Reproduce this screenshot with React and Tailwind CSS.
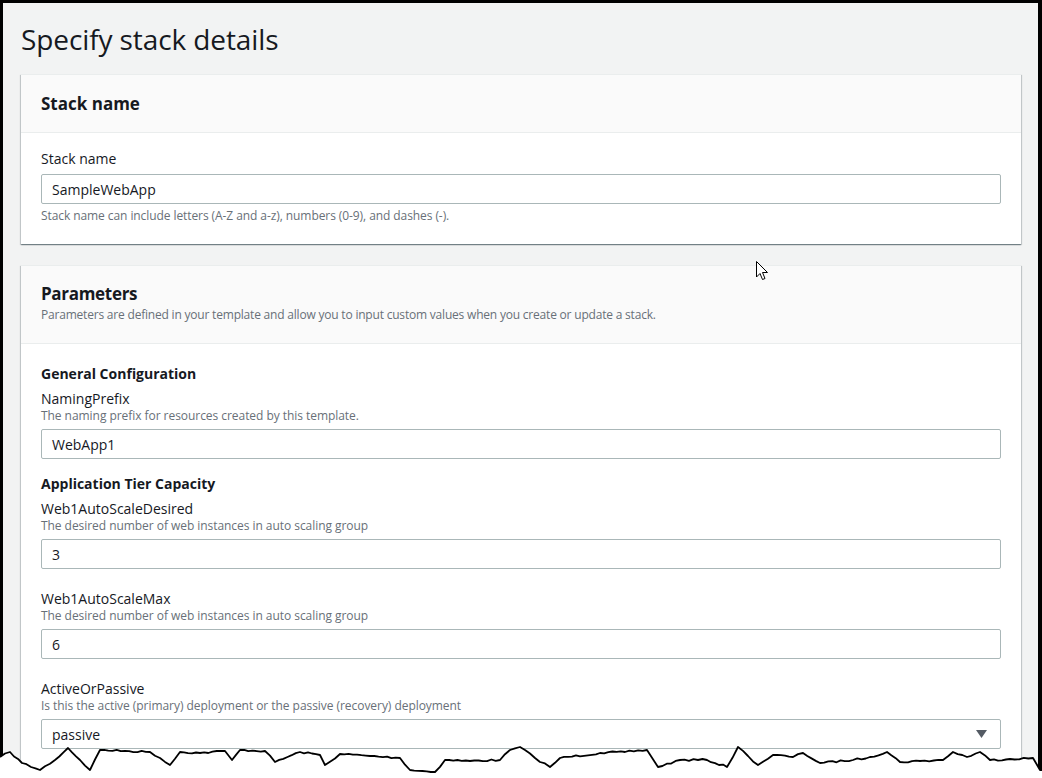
import React from "react";

const FONT = { fontFamily: '"Open Sans", "Noto Sans", Arial, sans-serif' };

function Field({ label, desc, value, select, className = "" }) {
  return (
    <div className={"flex flex-col " + className}>
      <div className="text-[14px] leading-[20px] text-[#16191f]">{label}</div>
      {desc && <div className="text-[12px] leading-[16px] text-[#687078] -mt-[1px] tracking-[-0.05px]">{desc}</div>}
      <div className="mt-[5px] h-[30px] border border-[#aab7b8] rounded-[2px] bg-white flex items-center justify-between pl-[10px] pr-[13px] text-[14px] text-[#16191f]">
        <span>{value}</span>
        {select && (
          <svg width="11" height="8" viewBox="0 0 11 8">
            <path d="M0 0 L11 0 L5.5 8 Z" fill="#545b64" />
          </svg>
        )}
      </div>
    </div>
  );
}

const torn = [
  [0, 757], [10, 752], [22, 763], [40, 770], [55, 760], [68, 748], [80, 760], [90, 770], [100, 750], [125, 751], [150, 752], [160, 758], [170, 765], [180, 752], [200, 753], [225, 751], [232, 760], [240, 750], [265, 751], [275, 762], [300, 752], [320, 755], [325, 765], [340, 754], [370, 756], [400, 758], [410, 770], [435, 772], [445, 760], [470, 761], [500, 760], [510, 750], [520, 747], [535, 758], [550, 767], [560, 758], [600, 753], [625, 752], [647, 750], [658, 767], [680, 760], [707, 760], [727, 767], [738, 747], [748, 756], [758, 765], [773, 755], [793, 757], [803, 753], [820, 763], [853, 760], [870, 757], [887, 752], [900, 762], [920, 761], [943, 760], [953, 752], [967, 757], [980, 752], [990, 760], [1010, 759], [1033, 758], [1040, 770], [1042, 770],
];

function roughen(pts) {
  const out = [];
  let seed = 7;
  const rnd = () => {
    seed = (seed * 16807) % 2147483647;
    return seed / 2147483647;
  };
  for (let i = 0; i < pts.length - 1; i++) {
    const [x0, y0] = pts[i];
    const [x1, y1] = pts[i + 1];
    out.push([x0, y0]);
    const n = Math.floor((x1 - x0) / 4);
    for (let k = 1; k < n; k++) {
      const t = k / n;
      out.push([
        +(x0 + (x1 - x0) * t).toFixed(1),
        +(y0 + (y1 - y0) * t + (rnd() - 0.5) * 2).toFixed(1),
      ]);
    }
  }
  out.push(pts[pts.length - 1]);
  return out;
}

export default function App() {
  const line = roughen(torn).map((p) => p.join(",")).join(" ");
  const poly = line + " 1042,778 0,778";
  return (
    <div className="relative w-[1042px] h-[778px] bg-white overflow-hidden" style={FONT}>
      <div className="w-full h-full border-l-[3px] border-t-[3px] border-r-[4px] border-black bg-[#f2f3f3] pl-[18px] pr-[17px] overflow-hidden">
        <h1 className="pt-[19px] text-[28px] leading-[34px] text-[#16191f] font-normal tracking-[-0.1px]">Specify stack details</h1>

        <div className="mt-[18px] bg-white border-t border-[#eaeded] shadow-[0_1px_1px_0_rgba(0,28,36,0.35),1px_1px_1px_0_rgba(0,28,36,0.15),-1px_1px_1px_0_rgba(0,28,36,0.15)]">
          <div className="h-[58px] bg-[#fafafa] border-b border-[#eaeded] px-[20px] flex items-center">
            <h2 className="text-[17px] font-bold text-[#16191f] leading-[22px]">Stack name</h2>
          </div>
          <div className="px-[20px] pt-[16px] pb-[20px] flex flex-col">
            <div className="text-[14px] leading-[20px] text-[#16191f]">Stack name</div>
            <div className="mt-[5px] h-[30px] border border-[#aab7b8] rounded-[2px] flex items-center pl-[10px] text-[14px] text-[#16191f]">SampleWebApp</div>
            <div className="mt-[4px] text-[12px] leading-[16px] text-[#687078] tracking-[-0.08px]">Stack name can include letters (A-Z and a-z), numbers (0-9), and dashes (-).</div>
          </div>
        </div>

        <div className="mt-[21px] bg-white border-t border-[#eaeded] shadow-[0_1px_1px_0_rgba(0,28,36,0.35),1px_1px_1px_0_rgba(0,28,36,0.15),-1px_1px_1px_0_rgba(0,28,36,0.15)]">
          <div className="h-[78px] bg-[#fafafa] border-b border-[#eaeded] px-[20px] pt-[17px] flex flex-col">
            <h2 className="text-[17px] font-bold text-[#16191f] leading-[22px] tracking-[-0.3px]">Parameters</h2>
            <div className="mt-[2px] text-[12px] leading-[16px] text-[#687078] tracking-[-0.2px]">Parameters are defined in your template and allow you to input custom values when you create or update a stack.</div>
          </div>
          <div className="px-[20px] pt-[20px] pb-[40px] flex flex-col">
            <h3 className="text-[14px] leading-[20px] font-bold text-[#16191f]">General Configuration</h3>
            <Field className="mt-[5px]" label="NamingPrefix" desc="The naming prefix for resources created by this template." value="WebApp1" />
            <h3 className="mt-[15px] text-[14px] leading-[20px] font-bold text-[#16191f]">Application Tier Capacity</h3>
            <Field className="mt-[5px]" label="Web1AutoScaleDesired" desc="The desired number of web instances in auto scaling group" value="3" />
            <Field className="mt-[20px]" label="Web1AutoScaleMax" desc="The desired number of web instances in auto scaling group" value="6" />
            <Field className="mt-[20px]" label="ActiveOrPassive" desc="Is this the active (primary) deployment or the passive (recovery) deployment" value="passive" select />
          </div>
        </div>
      </div>

      <svg className="absolute left-[756px] top-[261px]" width="13" height="20" viewBox="0 0 13 20">
        <path d="M0.5 0.5 L0.5 16 L4 12.5 L6.5 18.5 L9 17.5 L6.5 11.5 L11.5 11.5 Z" fill="white" stroke="black" strokeWidth="1" strokeLinejoin="round" />
      </svg>

      <svg className="absolute left-0 top-0 pointer-events-none" width="1042" height="778" viewBox="0 0 1042 778">
        <polygon points={poly} fill="white" />
        <polyline points={line} fill="none" stroke="black" strokeWidth="1.8" strokeLinejoin="round" />
      </svg>
    </div>
  );
}
